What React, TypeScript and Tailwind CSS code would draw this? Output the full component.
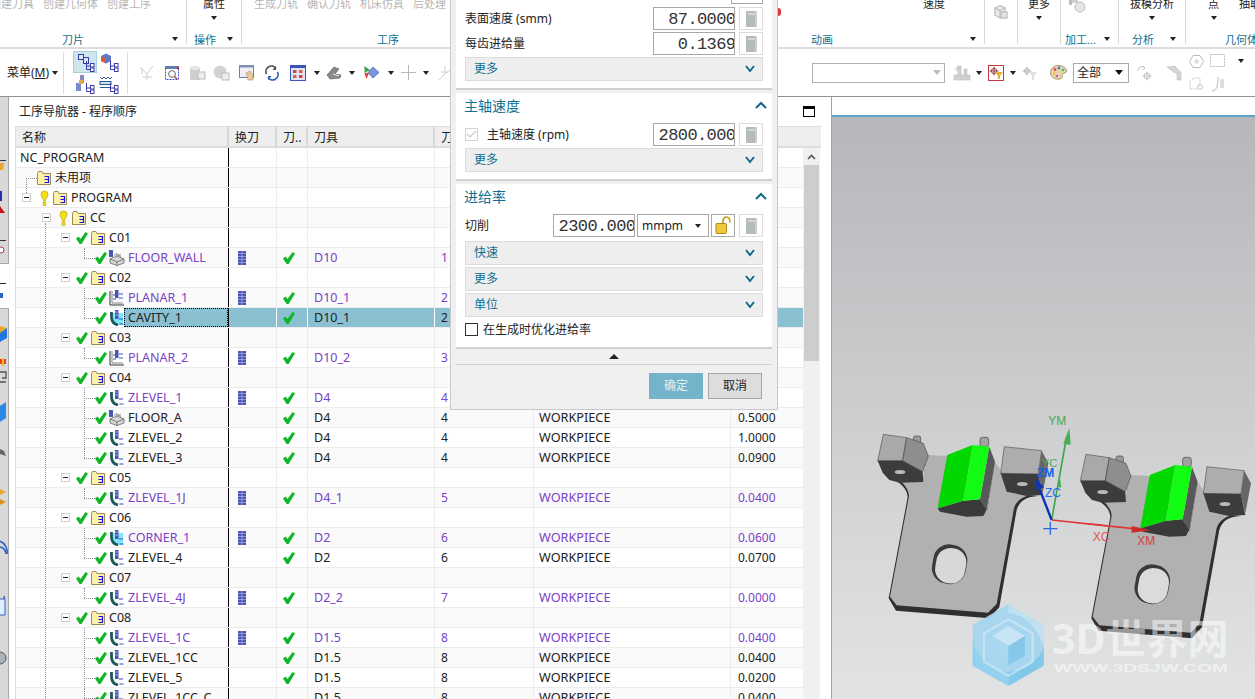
import React from "react";

const Tri = () => <span className="inline-block h-0 w-0 border-x-[3px] border-t-[4px] border-x-transparent border-t-[#222]" />;

const Chevron = ({ up = false }: { up?: boolean }) => (
  <svg width="14" height="10" viewBox="0 0 14 10" fill="none" stroke="#0e6a8a" strokeWidth="2">
    <path d={up ? "M2 8 L7 3 L12 8" : "M3 2 L7 7 L11 2"} />
  </svg>
);

const Calc = () => (
  <div className="flex h-[23px] w-[24px] items-center justify-center border border-[#dcdcdc] bg-white">
    <svg width="11" height="16" viewBox="0 0 11 16">
      <rect width="11" height="16" fill="#b4bbb9" />
      <rect x="2" y="2" width="7" height="2" fill="#cfd6d4" />
      <rect x="9" y="0" width="2" height="16" fill="#c9cecd" />
    </svg>
  </div>
);

const NumInput = ({ v }: { v: string }) => (
  <div className="flex h-[23px] w-[82px] justify-end overflow-hidden border border-[#a8a8a8] bg-white font-['Liberation_Mono',monospace] text-[17px] font-light leading-[23px] tracking-[-0.6px] text-[#333]">
    <span className="-mr-[11px] shrink-0">{v}</span>
  </div>
);

const Bar = ({ t }: { t: string }) => (
  <div className="flex h-[24px] items-center justify-between border border-[#dcdcdc] bg-[#eeeeee] pl-[8px] pr-[5px] text-[12px] text-[#0e6f92]">
    <span>{t}</span>
    <Chevron />
  </div>
);

const Head = ({ t }: { t: string }) => (
  <div className="-ml-[1px] flex h-[30px] items-center justify-between pb-[6px] text-[14px] text-[#0e6f92]">
    <span>{t}</span>
    <span className="-mr-[5px]">
      <Chevron up />
    </span>
  </div>
);

const Lock = () => (
  <svg width="16" height="19" viewBox="0 0 16 19">
    <path d="M8 7 V4.5 a3.4 3.4 0 0 1 6.8 0 V6.5" fill="none" stroke="#c9a227" strokeWidth="1.8" />
    <rect x="1" y="7.5" width="10.5" height="10" rx="1" fill="#f0c93a" stroke="#a8861c" />
  </svg>
);

const Dialog = () => (
  <div className="absolute left-[450px] top-0 flex h-[410px] w-[328px] flex-col border-x border-b border-[#c9c9c9] bg-[#f0f0f0] px-[5px] text-[12px] text-[#222]">
    <div className="flex h-[90px] flex-col border-b-2 border-[#d0d0d0] bg-white px-[9px]">
      <div className="flex h-[4px] justify-end"><div className="w-[32px] border-x border-b border-[#a8a8a8]" /></div>
      <div className="mt-[3px] flex h-[23px] items-center gap-[4px]">
        <span className="flex-1">表面速度 (smm)</span>
        <NumInput v="87.00000" />
        <Calc />
      </div>
      <div className="mt-[2px] flex h-[23px] items-center gap-[4px]">
        <span className="flex-1">每齿进给量</span>
        <NumInput v="0.13690" />
        <Calc />
      </div>
      <div className="mt-[2px]"><Bar t="更多" /></div>
    </div>
    <div className="mt-[3px] flex h-[88px] flex-col border-b-2 border-[#d0d0d0] bg-white px-[9px]">
      <Head t="主轴速度" />
      <div className="flex h-[23px] items-center gap-[4px]">
        <span className="flex h-[13px] w-[13px] items-center justify-center border border-[#d4d4d4]">
          <svg width="11" height="9" viewBox="0 0 11 9" fill="none" stroke="#c8c8c8" strokeWidth="1.2"><path d="M1 4 L4 7 L10 1" /></svg>
        </span>
        <span className="ml-[5px] flex-1">主轴速度 (rpm)</span>
        <NumInput v="2800.0000" />
        <Calc />
      </div>
      <div className="mt-[2px]"><Bar t="更多" /></div>
    </div>
    <div className="mt-[3px] flex h-[165px] flex-col border-b-2 border-[#d0d0d0] bg-white px-[9px]">
      <Head t="进给率" />
      <div className="flex h-[23px] items-center">
        <span className="flex-1">切削</span>
        <NumInput v="2300.0000" />
        <div className="ml-[2px] flex h-[23px] w-[72px] items-center justify-between border border-[#a8a8a8] pl-[4px] pr-[7px] text-[12px]">
          <span>mmpm</span>
          <Tri />
        </div>
        <div className="ml-[2px] flex h-[23px] w-[24px] items-center justify-center border border-[#a8a8a8]"><Lock /></div>
        <div className="ml-[4px]"><Calc /></div>
      </div>
      <div className="mt-[4px] flex flex-col gap-[2px]">
        <Bar t="快速" />
        <Bar t="更多" />
        <Bar t="单位" />
      </div>
      <div className="mt-[6px] flex h-[13px] items-center gap-[5px]">
        <span className="h-[13px] w-[13px] border border-[#333]" />
        <span>在生成时优化进给率</span>
      </div>
    </div>
    <div className="flex h-[16px] items-center justify-center border-b border-[#d4d4d4]">
      <span className="h-0 w-0 border-x-[5px] border-b-[5px] border-x-transparent border-b-[#222]" />
    </div>
    <div className="mt-[8px] flex justify-end gap-[5px] pr-[10px] text-[12px]">
      <div className="flex h-[26px] w-[54px] items-center justify-center bg-[#74b3c9] text-[#e4f1f5]">确定</div>
      <div className="flex h-[26px] w-[54px] items-center justify-center border border-[#a6a6a6] bg-[#dddddd]">取消</div>
    </div>
  </div>
);

const G = ({ t }: { t: string }) => <span className="text-[#b6b6b6]">{t}</span>;

const Label = ({ cls, t, tri = true }: { cls: string; t: string; tri?: boolean }) => (
  <div className={`-mb-[3px] mt-auto flex h-[14px] shrink-0 items-center whitespace-nowrap text-[#0e6f92] ${cls}`}>
    <span>{t}</span>
    {tri && <span className="ml-auto -mt-[2px] flex"><Tri /></span>}
  </div>
);

const Ribbon = () => (
  <div className="flex h-[49px] overflow-hidden border-b-2 border-[#dcdcdc] text-[11px]">
    <div className="flex h-[44px] w-[187px] shrink-0 flex-col border-r border-[#d8d8d8]">
      <div className="-ml-[10px] -mt-[5px] flex h-[18px] items-center gap-[9px] whitespace-nowrap">
        <G t="创建刀具" /><G t="创建几何体" /><G t="创建工序" />
      </div>
      <Label cls="pl-[62px] pr-[8px]" t="刀片" />
    </div>
    <div className="flex h-[44px] w-[55px] shrink-0 flex-col border-r border-[#d8d8d8]">
      <div className="-mt-[5px] flex h-[18px] items-center justify-center">属性</div>
      <div className="mt-[1px] flex h-[8px] items-center justify-center"><Tri /></div>
      <Label cls="pl-[7px] pr-[8px]" t="操作" />
    </div>
    <div className="flex h-[44px] w-[536px] shrink-0 flex-col">
      <div className="-mt-[5px] flex h-[18px] items-center gap-[9px] whitespace-nowrap pl-[12px]">
        <G t="生成刀轨" /><G t="确认刀轨" /><G t="机床仿真" /><G t="后处理" />
      </div>
      <Label cls="pl-[135px]" t="工序" tri={false} />
    </div>
    <div className="relative flex h-[44px] w-[207px] shrink-0 flex-col border-r border-[#d8d8d8]">
      <span className="absolute left-0 top-[8px] h-[8px] w-[3px] rounded-r-full bg-[#d8383a]" />
      <div className="-mt-[5px] flex h-[18px] items-center pl-[145px]">速度</div>
      <Label cls="pl-[33px] pr-[8px]" t="动画" />
    </div>
    <div className="flex h-[44px] w-[33px] shrink-0 items-start justify-center border-r border-[#d8d8d8] pt-[4px]">
      <svg width="16" height="16" viewBox="0 0 16 16" fill="none" stroke="#bdbdbd" strokeWidth="1.3">
        <path d="M2 4 L7 1.5 L12 4 V11 L7 14 L2 11 Z" fill="#ececec" />
        <path d="M2 4 L7 6.5 L12 4 M7 6.5 V14" />
        <rect x="8" y="8" width="6" height="6" fill="#e4e4e4" />
      </svg>
    </div>
    <div className="flex h-[44px] w-[43px] shrink-0 flex-col items-center border-r border-[#d8d8d8]">
      <div className="-mt-[5px] flex h-[18px] items-center">更多</div>
      <div className="mt-[1px] flex h-[8px] items-center"><Tri /></div>
    </div>
    <div className="flex h-[44px] w-[58px] shrink-0 flex-col border-r border-[#d8d8d8]">
      <div className="-mt-[2px] flex h-[16px] items-start pl-[7px]">
        <svg width="18" height="16" viewBox="0 0 18 16">
          <rect x="1" y="0" width="3" height="7" fill="#bcbcbc" />
          <rect x="4" y="2" width="6" height="3" fill="#cfcfcf" />
          <circle cx="12" cy="9" r="5" fill="#e6e6e6" stroke="#bdbdbd" />
        </svg>
      </div>
      <Label cls="pl-[4px] pr-[8px]" t="加工..." />
    </div>
    <div className="flex h-[44px] w-[67px] shrink-0 flex-col border-r border-[#d8d8d8]">
      <div className="-mt-[5px] flex h-[18px] items-center justify-center">拔模分析</div>
      <div className="mt-[1px] flex h-[8px] items-center justify-center"><Tri /></div>
      <Label cls="pl-[13px] pr-[9px]" t="分析" />
    </div>
    <div className="flex h-[44px] w-[70px] shrink-0 flex-col">
      <div className="-mt-[5px] flex h-[18px] items-center whitespace-nowrap pl-[22px]">
        <span>点</span><span className="ml-[20px]">抽取</span>
      </div>
      <div className="mt-[1px] flex h-[8px] items-center pl-[25px]"><Tri /></div>
      <Label cls="pl-[39px]" t="几何体" tri={false} />
    </div>
  </div>
);

const Branch = () => (
  <g fill="none" stroke="#3a3aa8">
    <path d="M12.5 9 V17.5 H16" />
    <path d="M12.5 14 H16" />
    <rect x="16.5" y="11.5" width="3.5" height="3.5" fill="#fff" />
    <rect x="16.5" y="16" width="3.5" height="3.5" fill="#fff" />
  </g>
);
const NavA = () => (
  <svg width="22" height="20" viewBox="0 0 22 20" fill="none" stroke="#3a3aa8">
    <rect x="4.5" y="2.5" width="5" height="5" fill="#dfe6f5" />
    <rect x="9.5" y="5.5" width="5" height="6" fill="#dfe6f5" />
    <Branch />
  </svg>
);
const NavB = () => (
  <svg width="22" height="20" viewBox="0 0 22 20">
    <path d="M3 4 L8 1.5 L13 4 V9 L8 11.5 L3 9 Z" fill="#5f78c8" />
    <path d="M3 4 L8 6.5 V11.5 L3 9 Z" fill="#d85a40" />
    <Branch />
  </svg>
);
const NavC = () => (
  <svg width="22" height="20" viewBox="0 0 22 20">
    <rect x="6" y="1" width="4" height="8" fill="#8a8ab8" />
    <rect x="2" y="9" width="5" height="8" fill="#7a8ad0" />
    <rect x="5" y="6" width="4" height="4" fill="#e8a850" />
    <Branch />
  </svg>
);
const NavD = () => (
  <svg width="22" height="20" viewBox="0 0 22 20" fill="none" stroke="#2a5a90">
    <path d="M2 3 L4 5 L6 3 L8 5 L10 3 L12 5 L14 3" />
    <rect x="2" y="7.5" width="11" height="3" fill="#cde0f0" />
    <path d="M2 13.5 H12" />
    <Branch />
  </svg>
);

type SlotProps = { w: string; children?: React.ReactNode };
const Slot = ({ w, children }: SlotProps) => <div className={`flex shrink-0 items-center justify-center ${w}`}>{children}</div>;

const GrayStar = () => (
  <svg width="16" height="16" viewBox="0 0 16 16" fill="none" stroke="#cfcfcf"><path d="M1 2 L8 9 L14 1 M8 9 V15 M3 12 H13 M3 3 V9" /></svg>
);
const Scan = () => (
  <svg width="16" height="16" viewBox="0 0 16 16" fill="none">
    <rect x="1.5" y="1.5" width="13" height="13" stroke="#2f4fd0" strokeDasharray="2 1" />
    <rect x="1" y="1" width="14" height="3" fill="#5f7fb0" />
    <circle cx="8" cy="9" r="3.4" stroke="#666" fill="#fff" />
    <path d="M10.5 11.5 L13 14" stroke="#c33" strokeWidth="1.5" />
    <circle cx="14" cy="3" r="1.2" fill="#d22" />
  </svg>
);
const Cyl = () => (
  <svg width="17" height="16" viewBox="0 0 17 16">
    <path d="M1 3 H11 V15 H1 Z" fill="#cfcfcf" />
    <ellipse cx="6" cy="3" rx="5" ry="2" fill="#e4e4e4" />
    <rect x="9" y="7" width="7" height="7" fill="#eee" stroke="#bbb" />
  </svg>
);
const Sphere = () => (
  <svg width="17" height="16" viewBox="0 0 17 16">
    <circle cx="7" cy="7" r="6.5" fill="#d2d2d2" />
    <rect x="9" y="8" width="7" height="7" fill="#eee" stroke="#bbb" />
  </svg>
);
const Hand = () => (
  <svg width="16" height="16" viewBox="0 0 16 16">
    <rect x="0.5" y="0.5" width="14" height="12" fill="#f0f0f4" stroke="#6a80a8" />
    <rect x="0" y="0" width="15" height="2.5" fill="#7d8fb4" />
    <path d="M7 8 L11 6 L14 10 L14 15 L9 15 Z" fill="#e8c9a0" stroke="#b58f60" strokeWidth="0.6" />
  </svg>
);
const Refresh = () => (
  <svg width="16" height="16" viewBox="0 0 16 16" fill="none" strokeWidth="1.7">
    <path d="M2.5 9 A5.5 5.5 0 0 1 12 3.5" stroke="#555" />
    <path d="M13.5 7 A5.5 5.5 0 0 1 4 12.5" stroke="#2f62b8" />
    <path d="M12 1 V5 H8.5 Z" fill="#555" />
    <path d="M4 15 V11 H7.5 Z" fill="#2f62b8" />
  </svg>
);
const RedWin = () => (
  <svg width="16" height="16" viewBox="0 0 16 16">
    <rect x="0.5" y="0.5" width="15" height="15" fill="#dfe5f7" stroke="#3a54b8" />
    <rect x="0" y="0" width="16" height="3" fill="#3a54b8" />
    <rect x="3" y="5" width="3.5" height="3" fill="#e04040" />
    <rect x="9" y="5" width="3.5" height="3" fill="#e06040" />
    <rect x="3" y="10" width="3.5" height="3" fill="#e06040" />
    <rect x="9" y="10" width="3.5" height="3" fill="#e04040" />
  </svg>
);
const Machine = () => (
  <svg width="16" height="15" viewBox="0 0 16 15">
    <path d="M1 10 L8 2 L13 4 L9 9 L15 10 L14 13 L4 14 Z" fill="#8a8a8a" stroke="#555" strokeWidth="0.6" />
    <path d="M7 9 L13 11" stroke="#eee" />
  </svg>
);
const Diamond = () => (
  <svg width="17" height="15" viewBox="0 0 17 15">
    <path d="M9 2 L15 7.5 L9 13 L4 7.5 Z" fill="#7b96d8" stroke="#3a5ab0" strokeWidth="0.7" />
    <path d="M0.5 1 L6 5 L0.5 8 Z" fill="#3aa44a" />
    <path d="M0.5 8 L5 8 L2.5 14 Z" fill="#d84040" />
  </svg>
);
const Plus = () => (
  <svg width="15" height="15" viewBox="0 0 15 15" stroke="#b8b8b8"><path d="M7.5 0 V15 M0 7.5 H15" /></svg>
);
const Fade = () => (
  <svg width="14" height="16" viewBox="0 0 14 16" fill="none" stroke="#d2d2d2"><path d="M1 15 L7 9 L7 1 M7 9 L13 4 M3 7 H11" /></svg>
);
const Lathe = () => (
  <svg width="18" height="18" viewBox="0 0 18 18" fill="#d2d2d2" stroke="#bbb" strokeWidth="0.6">
    <rect x="1" y="11" width="16" height="5" />
    <rect x="5" y="2" width="3" height="10" />
    <rect x="11" y="5" width="3" height="7" />
    <path d="M1 5 H8 M4 2 V8" fill="none" />
  </svg>
);
const Cross = ({ c = "#8a5a60" }: { c?: string }) => (
  <g fill="none" stroke={c}>
    <circle cx="5" cy="5" r="2.6" />
    <path d="M5 0.5 V9.5 M0.5 5 H9.5" />
  </g>
);
const FilterRed = () => (
  <div className="flex h-[16px] w-[16px] items-center justify-center border border-[#c8383c]">
    <svg width="14" height="13" viewBox="0 0 14 13">
      <Cross c="#8c3c46" />
      <path d="M6 6 H14 L11 10 V13 H9 V10 Z" fill="#e8b23a" />
    </svg>
  </div>
);
const FilterGray = () => (
  <svg width="16" height="14" viewBox="0 0 16 14">
    <Cross c="#b4b4b4" />
    <path d="M7 6 H15 L12 10 V14 H10 V10 Z" fill="#e0e0e0" />
  </svg>
);
const Palette = () => (
  <svg width="17" height="15" viewBox="0 0 17 15">
    <path d="M8 0.5 C13 0.5 16.5 3 16.5 6 C16.5 8.5 13 8 12.5 9.5 C12 11.5 13 13 10 14 C5 15 0.5 12 0.5 7.5 C0.5 3.5 4 0.5 8 0.5 Z" fill="#e8d4a8" stroke="#8a7448" strokeWidth="0.7" />
    <circle cx="5" cy="4.5" r="1.4" fill="#e04848" />
    <circle cx="9" cy="3" r="1.4" fill="#3c7ee0" />
    <circle cx="13" cy="5" r="1.3" fill="#48b858" />
    <circle cx="4" cy="8.5" r="1.3" fill="#f0c030" />
    <circle cx="7" cy="11" r="1.3" fill="#c060d0" />
  </svg>
);
const GrayA = () => (
  <svg width="16" height="16" viewBox="0 0 16 16" fill="none" stroke="#c0c0c0"><path d="M1 6 A4 4 0 0 1 8 3 L6 1 M8 3 L6 5" /><circle cx="10" cy="11" r="3" /><path d="M10 6.5 V15.5 M5.5 11 H14.5" /></svg>
);
const GrayB = () => (
  <svg width="16" height="16" viewBox="0 0 16 16" fill="#d4d4d4" stroke="#bcbcbc" strokeWidth="0.6"><path d="M1 2 L9 1 L13 6 L15 7 V15 H11 V9 L6 6 Z" /></svg>
);

const Toolbar = () => (
  <div className="flex h-[48px] items-center overflow-hidden border-b border-[#8b9198] bg-white text-[12px] text-[#222]">
    <span className="ml-[7px] w-[41px] shrink-0 whitespace-nowrap">菜单(<span className="underline">M</span>)</span>
    <span className="ml-[4px] flex shrink-0"><Tri /></span>
    <span className="ml-[5px] h-[42px] w-px shrink-0 bg-[#dcdcdc]" />
    <div className="ml-[9px] grid shrink-0 grid-cols-[24px_24px] grid-rows-[22px_22px]">
      <div className="flex items-center justify-center border border-[#a8d0de] bg-[#cfe6ee]"><NavA /></div>
      <div className="flex items-center justify-center"><NavB /></div>
      <div className="flex items-center justify-center"><NavC /></div>
      <div className="flex items-center justify-center"><NavD /></div>
    </div>
    <span className="ml-[6px] h-[42px] w-px shrink-0 bg-[#dcdcdc]" />
    <Slot w="ml-[6px] w-[26px]"><GrayStar /></Slot>
    <Slot w="w-[24px]"><Scan /></Slot>
    <Slot w="w-[27px]"><Cyl /></Slot>
    <Slot w="w-[21px]"><Sphere /></Slot>
    <Slot w="w-[30px]"><Hand /></Slot>
    <Slot w="w-[20px]"><Refresh /></Slot>
    <Slot w="w-[32px]"><RedWin /></Slot>
    <Slot w="w-[6px]"><Tri /></Slot>
    <Slot w="w-[28px]"><Machine /></Slot>
    <Slot w="w-[8px]"><Tri /></Slot>
    <Slot w="w-[32px]"><Diamond /></Slot>
    <Slot w="w-[6px]"><Tri /></Slot>
    <Slot w="w-[28px]"><Plus /></Slot>
    <Slot w="w-[8px]"><Tri /></Slot>
    <Slot w="w-[30px]"><Fade /></Slot>
    <div className="ml-[352px] flex h-[20px] w-[133px] shrink-0 items-center justify-end border border-[#b0b0b0] pr-[3px]">
      <span className="h-0 w-0 border-x-[4px] border-t-[5px] border-x-transparent border-t-[#bdbdbd]" />
    </div>
    <Slot w="ml-[5px] w-[24px]"><Lathe /></Slot>
    <Slot w="w-[10px]"><Tri /></Slot>
    <Slot w="w-[24px]"><FilterRed /></Slot>
    <Slot w="w-[10px]"><Tri /></Slot>
    <Slot w="w-[24px]"><FilterGray /></Slot>
    <Slot w="ml-[2px] w-[28px]"><Palette /></Slot>
    <div className="ml-[1px] flex h-[20px] w-[56px] shrink-0 items-center justify-between border border-[#a8a8a8] pl-[3px] pr-[5px] text-[12px]">
      <span>全部</span>
      <span className="h-0 w-0 border-x-[4px] border-t-[5px] border-x-transparent border-t-[#111]" />
    </div>
    <Slot w="ml-[3px] w-[26px]"><GrayA /></Slot>
    <Slot w="ml-[4px] w-[24px]"><GrayB /></Slot>
    <div className="grid shrink-0 grid-cols-[21px_21px_26px_10px] grid-rows-[23px_23px] items-center justify-items-center">
      <svg width="15" height="13" viewBox="0 0 15 13" fill="none" stroke="#bbb"><path d="M4 .5 H11 L14.5 6.5 L11 12.5 H4 L.5 6.5 Z" /><circle cx="7.5" cy="6.5" r="1.5" /></svg>
      <svg width="16" height="14" viewBox="0 0 16 14" fill="none" stroke="#bbb" strokeDasharray="2 1"><rect x=".5" y=".5" width="14" height="12" /></svg>
      <Tri />
      <span className="h-[12px] w-[8px] justify-self-end border border-r-0 border-[#bbb]" />
      <svg width="16" height="14" viewBox="0 0 16 14" fill="none" stroke="#c4c4c4" strokeDasharray="1.5 1"><path d="M1 4 L5 1 H11 V8 L7 12 H1 Z" /><circle cx="11" cy="10" r="2.5" strokeDasharray="none" /></svg>
      <svg width="16" height="16" viewBox="0 0 16 16" fill="none" stroke="#bbb"><path d="M2 15 C7 15 8 9 8 1 M11 3 V12 M13 3 V12" /></svg>
      <span />
      <svg width="8" height="14" viewBox="0 0 8 14" fill="none" stroke="#c4c4c4" className="justify-self-end"><path d="M4 0 V14 M0 4 H8" /></svg>
    </div>
  </div>
);

const Dock = () => (
  <div className="h-full w-[9px] shrink-0 overflow-hidden">
    <svg width="9" height="602" viewBox="0 97 9 602">
      <rect x="0" y="97" width="8" height="166" fill="#d8d8d8" />
      <rect x="8" y="97" width="1" height="167" fill="#a8a8a8" />
      <rect x="0" y="263" width="9" height="1" fill="#a8a8a8" />
      <rect x="0" y="308" width="8" height="391" fill="#d8d8d8" />
      <rect x="8" y="308" width="1" height="391" fill="#a8a8a8" />
      <rect x="0" y="308" width="9" height="1" fill="#a8a8a8" />
      <rect x="0" y="160" width="6" height="1" fill="#333" />
      <path d="M0 163 H4 L3 170 H0 Z" fill="#e8a830" />
      <rect x="0" y="191" width="2" height="10" fill="#2233aa" />
      <path d="M0 206 L5 213 H0 Z" fill="#c81818" />
      <rect x="0" y="240" width="6" height="1" fill="#333" />
      <circle cx="1" cy="250" r="3" fill="#fff" stroke="#a03a80" />
      <rect x="0" y="283" width="6" height="1" fill="#222" />
      <path d="M0 293 H3 V298 H0 Z" fill="#2f62c8" />
      <path d="M0 331 L7 328 V338 L0 342 Z" fill="#1e78e0" />
      <path d="M0 326 L7 328 L0 333 Z" fill="#e8a830" />
      <rect x="0" y="359" width="6" height="5" fill="#e84020" />
      <rect x="2" y="358" width="2" height="8" fill="#f0c030" />
      <path d="M0 372 H6 V378 H2 M6 382 H0" stroke="#555" strokeWidth="1.3" fill="none" />
      <path d="M0 406 L6 402 V418 L0 422 Z" fill="#2a88e8" />
      <path d="M0 449 L4 451 L6 456 L0 454 Z" fill="#666" />
      <path d="M0 489 L6 492 L0 495 Z" fill="#e8a830" />
      <path d="M0 499 L6 502 L0 505 Z" fill="#d89020" />
      <g fill="none" stroke="#2f62c8" strokeWidth="1.6">
        <path d="M0 547 A7 7 0 0 1 6 554" />
        <path d="M0 541 A12 12 0 0 1 7 554" />
      </g>
      <path d="M0 599 H4 V596 L5 600 V615 H0" fill="#dfefff" stroke="#2f62c8" />
      <circle cx="0" cy="658" r="6" fill="#aab2bc" stroke="#555" />
    </svg>
  </div>
);

const Folder = () => (
  <svg width="14" height="14" viewBox="0 0 14 14" className="block shrink-0">
    <path d="M0.5 2.5 V13.5 H13.5 V2.5 H6 L5 .5 H1.5 Z" fill="#fdf0a8" stroke="#9c8a58" />
    <path d="M7.5 5.5 H11.5 V11.5 H7.5 M7.5 8.5 H11.5" fill="none" stroke="#1616e4" strokeWidth="1.2" />
  </svg>
);
const Bulb = () => (
  <svg width="9" height="16" viewBox="0 0 9 16" className="shrink-0">
    <path d="M1 4.5 A3.5 3.5 0 0 1 8 4.5 C8 7 5.5 8.5 5.3 11 H3.7 C3.5 8.5 1 7 1 4.5 Z" fill="#f6e010" stroke="#b8a010" strokeWidth="0.7" />
    <rect x="3" y="12" width="3" height="3.4" fill="#f6e010" stroke="#a89010" strokeWidth="0.5" />
  </svg>
);
const Check = () => (
  <svg width="12" height="12" viewBox="0 0 12 12" className="shrink-0">
    <path d="M0 6.5 L2.6 4.6 L4.5 7 L9.6 0 L12 1.5 L5.6 12 H3.6 Z" fill="#12b52a" />
  </svg>
);
const Expand = () => (
  <span className="relative flex h-[9px] w-[9px] shrink-0 items-center justify-center border border-[#d0d0d0] bg-white">
    <span className="h-px w-[5px] bg-[#222]" />
  </span>
);
const ToolMark = () => (
  <svg width="8" height="14" viewBox="0 0 8 14" className="block">
    <rect width="8" height="14" fill="#4a55b8" />
    <path d="M0 2.5 H8 M0 5.5 H8 M0 8.5 H8 M0 11.5 H8 M4 0 V14" stroke="#a0a8e0" strokeWidth="0.8" />
  </svg>
);
const OpMill = () => (
  <svg width="16" height="16" viewBox="0 0 16 16" className="shrink-0">
    <path d="M1 9 L8 6 L15 9 V13 L8 15.5 L1 13 Z" fill="#d8d8d8" stroke="#666" strokeWidth="0.8" />
    <path d="M1 9 L8 12 L15 9 M8 12 V15.5" fill="none" stroke="#666" strokeWidth="0.8" />
    <rect x="0" y="0" width="4" height="7" fill="#4a55b8" />
    <path d="M5 5 H12 M7 3 L12 7" stroke="#777" strokeWidth="0.8" />
  </svg>
);
const OpPlanar = () => (
  <svg width="16" height="16" viewBox="0 0 16 16" className="shrink-0">
    <path d="M1 1 V15 H15" fill="none" stroke="#333" />
    <path d="M3 1 V13 H14" fill="none" stroke="#888" />
    <rect x="6" y="0" width="3.5" height="8" fill="#4a55b8" />
    <path d="M4 5 H6 M4 9 H7 M10 4 H14 M10 8 H14" stroke="#3a55c8" />
  </svg>
);
const OpZ = ({ fill }: { fill?: string }) => (
  <svg width="16" height="16" viewBox="0 0 16 16" className="shrink-0">
    {fill && <path d="M4 3 H14 V15 H7 C5 13 4 11 4 8 Z" fill={fill} />}
    <path d="M2.5 2 V7 C2.5 11 5 14 9 15" fill="none" stroke="#1c5a5c" strokeWidth="2.8" />
    <rect x="6" y="0" width="3.5" height="9" fill="#4a55b8" />
    <path d="M6 2 H9.5 M6 5 H9.5" stroke="#a0a8e0" />
    <path d="M10 9 H14 M10.5 14 H14.5" stroke="#2f50d0" />
  </svg>
);

type Kind = "root" | "unused" | "program" | "cc" | "group" | "op";
type RowT = { k: Kind; n: string; p?: boolean; ic?: string; d?: [string, string, string?, string?]; s?: boolean; m?: boolean };

const rows: RowT[] = [
  { k: "root", n: "NC_PROGRAM" },
  { k: "unused", n: "未用项" },
  { k: "program", n: "PROGRAM" },
  { k: "cc", n: "CC" },
  { k: "group", n: "C01" },
  { k: "op", n: "FLOOR_WALL", p: true, ic: "m", d: ["D10", "1", "WORKPIECE", "0.1000"] },
  { k: "group", n: "C02" },
  { k: "op", n: "PLANAR_1", p: true, ic: "p", d: ["D10_1", "2", "WORKPIECE", "0.2000"] },
  { k: "op", n: "CAVITY_1", ic: "c", s: true, d: ["D10_1", "2", "WORKPIECE", "0.2000"] },
  { k: "group", n: "C03" },
  { k: "op", n: "PLANAR_2", p: true, ic: "p", d: ["D10_2", "3", "WORKPIECE", "0.0000"] },
  { k: "group", n: "C04" },
  { k: "op", n: "ZLEVEL_1", p: true, ic: "z", d: ["D4", "4", "WORKPIECE", "0.5000"] },
  { k: "op", n: "FLOOR_A", ic: "m", d: ["D4", "4", "WORKPIECE", "0.5000"] },
  { k: "op", n: "ZLEVEL_2", ic: "z", d: ["D4", "4", "WORKPIECE", "1.0000"] },
  { k: "op", n: "ZLEVEL_3", ic: "z", d: ["D4", "4", "WORKPIECE", "0.0900"] },
  { k: "group", n: "C05" },
  { k: "op", n: "ZLEVEL_1J", p: true, ic: "z", d: ["D4_1", "5", "WORKPIECE", "0.0400"] },
  { k: "group", n: "C06" },
  { k: "op", n: "CORNER_1", p: true, ic: "k", d: ["D2", "6", "WORKPIECE", "0.0600"] },
  { k: "op", n: "ZLEVEL_4", ic: "z", d: ["D2", "6", "WORKPIECE", "0.0700"] },
  { k: "group", n: "C07" },
  { k: "op", n: "ZLEVEL_4J", p: true, ic: "z", d: ["D2_2", "7", "WORKPIECE", "0.0000"] },
  { k: "group", n: "C08" },
  { k: "op", n: "ZLEVEL_1C", p: true, ic: "z", d: ["D1.5", "8", "WORKPIECE", "0.0400"] },
  { k: "op", n: "ZLEVEL_1CC", ic: "z", d: ["D1.5", "8", "WORKPIECE", "0.0400"] },
  { k: "op", n: "ZLEVEL_5", ic: "z", d: ["D1.5", "8", "WORKPIECE", "0.0200"] },
  { k: "op", n: "ZLEVEL_1CC_C", ic: "z", m: true, d: ["D1.5", "8", "WORKPIECE", "0.0400"] },
];

const PURPLE = "text-[#7a42c8]";
const DOT = "border-dotted border-[#8c8c8c]";

const NameCell = ({ r, i }: { r: RowT; i: number }) => {
  const next = rows[i + 1];
  const lastOp = r.k === "op" && (!next || next.k !== "op");
  return (
    <div className="relative flex h-full w-[213px] shrink-0 items-center overflow-hidden border-r border-black text-[12.5px]">
      {i >= 3 && <span className={`absolute left-[29px] bottom-0 border-l ${DOT} ${i === 3 ? "top-[15px]" : "top-0"}`} />}
      {r.k === "unused" && (
        <>
          <span className={`absolute left-[10px] top-[10px] bottom-0 border-l ${DOT}`} />
          <span className={`absolute left-[10px] top-[10px] w-[11px] border-t ${DOT}`} />
        </>
      )}
      {r.k === "program" && <span className={`absolute left-[10px] top-0 h-[5px] border-l ${DOT}`} />}
      {r.k === "op" && (
        <>
          <span className={`absolute left-[68px] top-0 border-l ${DOT} ${lastOp ? "h-[10px]" : "bottom-0"}`} />
          <span className={`absolute left-[68px] top-[10px] w-[11px] border-t ${DOT}`} />
        </>
      )}
      {r.k === "root" && <span className="ml-[4px] translate-y-px">{r.n}</span>}
      {r.k === "unused" && (
        <>
          <span className="ml-[21px]"><Folder /></span>
          <span className="ml-[4px] text-[12px]">{r.n}</span>
        </>
      )}
      {r.k === "program" && (
        <>
          <span className="ml-[6px]"><Expand /></span>
          <span className="ml-[9px] flex"><Bulb /></span>
          <span className="ml-[4px]"><Folder /></span>
          <span className="ml-[4px] translate-y-px">{r.n}</span>
        </>
      )}
      {r.k === "cc" && (
        <>
          <span className="ml-[26px]"><Expand /></span>
          <span className="ml-[8px] flex"><Bulb /></span>
          <span className="ml-[4px]"><Folder /></span>
          <span className="ml-[4px] translate-y-px">{r.n}</span>
        </>
      )}
      {r.k === "group" && (
        <>
          <span className="ml-[45px]"><Expand /></span>
          <span className="ml-[6px] flex"><Check /></span>
          <span className="ml-[3px]"><Folder /></span>
          <span className="ml-[4px] translate-y-px">{r.n}</span>
        </>
      )}
      {r.k === "op" && (
        <>
          <span className="relative ml-[79px] flex"><Check /></span>
          <span className="relative ml-[2px] flex">
            {r.ic === "m" && <OpMill />}
            {r.ic === "p" && <OpPlanar />}
            {r.ic === "z" && <OpZ />}
            {r.ic === "c" && <OpZ fill="#7fe8f8" />}
            {r.ic === "k" && <OpZ fill="#7fe8f8" />}
          </span>
          {r.s ? (
            <span className="-ml-px flex h-full flex-1 items-center border border-dotted border-black bg-[#8bc0d2] pl-[3px]"><span className="translate-y-px">{r.n}</span></span>
          ) : (
            <span className={`ml-[3px] translate-y-px ${r.p ? PURPLE : ""}`}>{r.n}</span>
          )}
        </>
      )}
    </div>
  );
};

const cellCls = "flex h-full shrink-0 items-center border-r border-[#ececec]";

const TreeRow = ({ r, i }: { r: RowT; i: number }) => {
  const t = r.p ? PURPLE : "";
  const bg = r.s ? "bg-[#8bc0d2]" : "";
  const sep = r.s ? "border-r-white" : "";
  return (
    <div className={`flex h-[20px] shrink-0 border-b border-[#ececec] ${i % 2 ? "bg-[#fafafa]" : "bg-white"}`}>
      <NameCell r={r} i={i} />
      <div className={`${cellCls} w-[48px] pl-[9px] ${bg} ${sep}`}>{r.d && r.p && <ToolMark />}</div>
      <div className={`${cellCls} w-[31px] pl-[6px] ${bg} ${sep}`}>
        {r.d && !r.m && <Check />}
        {r.m && <span className="mt-[12px] h-[5px] w-[10px] bg-[#8a2cc0]" />}
      </div>
      <div className={`${cellCls} w-[127px] pl-[6px] text-[12.5px] ${t} ${bg} ${sep}`}><span className="translate-y-px">{r.d?.[0]}</span></div>
      <div className={`${cellCls} w-[99px] pl-[6px] ${t} ${bg} ${sep}`}>{r.d?.[1]}</div>
      <div className={`${cellCls} w-[197px] pl-[5px] text-[12.7px] ${t} ${bg} ${sep}`}>{r.d?.[2]}</div>
      <div className={`${cellCls} w-[72px] pl-[7px] !border-r-0 ${t} ${bg}`}>{r.d?.[3]}</div>
    </div>
  );
};

const HeadCell = ({ w, t }: { w: string; t?: string }) => (
  <div className={`flex h-full shrink-0 items-center overflow-hidden whitespace-nowrap border-r-2 border-[#d8d8d8] pl-[6px] pt-[2px] ${w}`}>{t}</div>
);

const Navigator = () => (
  <div className="flex h-full w-[823px] shrink-0 flex-col overflow-hidden border-r border-[#a0a4a8] bg-white pl-[6px] text-[12px] text-[#222]">
    <div className="flex h-[29px] shrink-0 items-center justify-between pl-[4px] pr-[16px]">
      <span className="text-[12px]">工序导航器 - 程序顺序</span>
      <span className="h-[11px] w-[12px] border border-t-[3px] border-black" />
    </div>
    <div className="flex w-[806px] flex-col border-l border-t border-[#dcdcdc]">
      <div className="flex h-[21px] shrink-0 border-b-2 border-[#dcdcdc] bg-[#eeeeee]">
        <HeadCell w="w-[213px]" t="名称" />
        <HeadCell w="w-[48px]" t="换刀" />
        <HeadCell w="w-[31px]" t="刀.." />
        <HeadCell w="w-[127px]" t="刀具" />
        <HeadCell w="w-[99px]" t="刀" />
        <HeadCell w="w-[197px]" t="几何体" />
        <div className="flex-1" />
      </div>
      <div className="flex">
        <div className="flex w-[787px] shrink-0 flex-col">
          {rows.map((r, i) => (
            <TreeRow key={r.n + i} r={r} i={i} />
          ))}
        </div>
        <div className="flex w-[17px] shrink-0 flex-col items-center bg-[#f0f0f0]">
          <div className="flex h-[17px] items-center justify-center">
            <svg width="9" height="6" viewBox="0 0 9 6" fill="none" stroke="#555" strokeWidth="1.6"><path d="M1 5 L4.5 1.5 L8 5" /></svg>
          </div>
          <div className="h-[196px] w-[15px] bg-[#cdcdcd]" />
        </div>
      </div>
    </div>
  </div>
);

const Part = ({ dx, dy, hole }: { dx: number; dy: number; hole: string }) => (
  <g transform={`translate(${dx} ${dy})`}>
    <path d="M200 170 L262 172 L235 320 L380 340 L405 190 L428 225 L440 280 L535 288 C495 290 478 305 470 330 L418 622 L388 655 L108 632 L86 595 L143 292 C143 272 128 255 112 245 L190 240 Z" fill="#2f2f2f" />
    <path d="M200 165 L262 168 L235 320 L380 340 L405 185 L428 220 L440 275 L530 282 C492 285 470 300 462 325 L410 612 L384 638 L110 616 L90 590 L147 288 C146 268 132 252 118 240 L190 236 Z" fill="#b1b1b1" />
    <rect x="160" y="108" width="22" height="22" rx="6" fill="#9a9a9a" stroke="#444" strokeWidth="2" />
    <path d="M70 103 L140 113 L128 182 L53 182 Z" fill="#a9a9a9" stroke="#333" strokeWidth="1.5" />
    <path d="M140 113 L190 130 L205 168 L188 215 L128 182 Z" fill="#8e8e8e" stroke="#333" strokeWidth="1.5" />
    <path d="M53 182 L128 182 L188 215 L190 246 L120 248 L88 240 L68 218 Z" fill="#3c3c3c" />
    <ellipse cx="120" cy="216" rx="16" ry="6" fill="#b8b8b8" />
    <rect x="360" y="112" width="26" height="28" rx="7" fill="#a2a2a2" stroke="#444" strokeWidth="2" />
    <path d="M388 140 L405 185 L380 332 L360 298 Z" fill="#585858" />
    <path d="M233 325 L310 302 L360 298 L380 330 L370 348 L320 350 L240 335 Z" fill="#3a3a3a" />
    <path d="M262 165 L338 135 L310 302 L233 325 Z" fill="#00d800" />
    <path d="M338 135 L388 140 L360 298 L310 302 Z" fill="#12fb12" />
    <path d="M433 140 L545 152 L535 222 L422 220 Z" fill="#adadad" stroke="#333" strokeWidth="1.5" />
    <path d="M545 152 L565 190 L548 280 L535 222 Z" fill="#666" />
    <path d="M422 220 L535 222 L548 285 L500 288 L440 275 Z" fill="#3c3c3c" />
    <ellipse cx="487" cy="252" rx="16" ry="6" fill="#b8b8b8" />
    <rect x="218" y="434" width="102" height="118" rx="46" transform="rotate(10 270 492)" fill="#3a3a3a" />
    <rect x="228" y="444" width="90" height="106" rx="42" transform="rotate(10 270 492)" fill={hole} />
  </g>
);

const Viewport = () => (
  <div className="flex h-full flex-1 flex-col overflow-hidden bg-white">
    <div className="h-[20px] shrink-0 border-b-2 border-[#5da5c4]" />
    <div className="flex-1 bg-gradient-to-b from-[#b6b7ba] to-[#e2e4e4]">
      <svg width="423" height="582" viewBox="832 117 423 582" className="block font-['Liberation_Sans',sans-serif]">
        <g transform="translate(860 400) scale(0.3333)">
          <Part dx={0} dy={0} hole="#d6d8d9" />
          <Part dx={608} dy={60} hole="#d9dbdc" />
          <path d="M575 360 L620 110" stroke="#3fa84c" strokeWidth="5" />
          <path d="M628 84 L610 132 L632 134 Z" fill="#46ad52" />
          <path d="M600 235 L592 262 L604 262 Z" fill="#46ad52" />
          <text x="565" y="74" fontSize="36" fill="#4aa856">YM</text>
          <text x="545" y="200" fontSize="34" fill="#4aa856">YC</text>
          <path d="M575 360 L540 270" stroke="#0f2fb8" strokeWidth="7" />
          <path d="M527 235 L530 272 L552 262 Z" fill="#0f36b8" />
          <text x="531" y="230" fontSize="36" fontWeight="bold" fill="#1460f0">ZM</text>
          <text x="555" y="290" fontSize="36" fill="#1c6ef0">ZC</text>
          <path d="M550 386 H592 M571 366 V404" stroke="#2a68e0" strokeWidth="4" fill="none" />
          <path d="M575 360 L820 386" stroke="#e03636" strokeWidth="5" />
          <path d="M640 368 L720 372 L745 380 Z" fill="#e03636" />
          <path d="M815 378 L872 391 L815 398 Z" fill="#cc2a2a" />
          <text x="698" y="422" fontSize="36" fill="#e25454">XC</text>
          <text x="832" y="436" fontSize="36" fill="#d84040">XM</text>
          <g opacity="0.92">
            <path d="M445 613 L551 675 V797 L445 858 L338 797 V675 Z" fill="#a3d6f0" />
            <path d="M445 613 L551 675 V740 C530 670 480 640 445 640 Z" fill="#bfe2f3" />
            <path d="M551 740 V797 L445 858 V815 C500 810 540 780 551 740 Z" fill="#7ac7ec" />
            <path d="M338 797 V720 C345 770 400 815 445 815 V858 Z" fill="#8fd0f0" />
            <path d="M445 658 L518 700 V785 L445 827 L372 785 V700 Z" fill="none" stroke="#e4f3fa" strokeWidth="7" opacity="0.5" />
            <path d="M445 678 L495 708 L445 738 L397 708 Z" fill="#c6e6f6" />
            <path d="M397 708 L445 738 V795 L397 767 Z" fill="#a6d8f2" />
            <path d="M495 708 L445 738 V795 L495 767 Z" fill="#7ec6ea" />
          </g>
          <text x="576" y="762" fontSize="122" fontWeight="bold" textLength="530" lengthAdjust="spacingAndGlyphs" fill="#ffffff" opacity="0.5" className="font-['Noto_Sans','Noto_Sans_CJK_SC',sans-serif]">3D世界网</text>
          <text x="582" y="816" fontSize="34" fontWeight="bold" textLength="522" lengthAdjust="spacingAndGlyphs" fill="#ffffff" opacity="0.5">WWW.3DSJW.COM</text>
        </g>
      </svg>
    </div>
  </div>
);

export default function App() {
  return (
    <div className="relative flex h-[699px] w-[1255px] flex-col overflow-hidden bg-white font-['Noto_Sans','Noto_Sans_CJK_SC',sans-serif] text-[#222]">
      <Ribbon />
      <Toolbar />
      <div className="flex h-[602px] shrink-0">
        <Dock />
        <Navigator />
        <Viewport />
      </div>
      <Dialog />
    </div>
  );
}
